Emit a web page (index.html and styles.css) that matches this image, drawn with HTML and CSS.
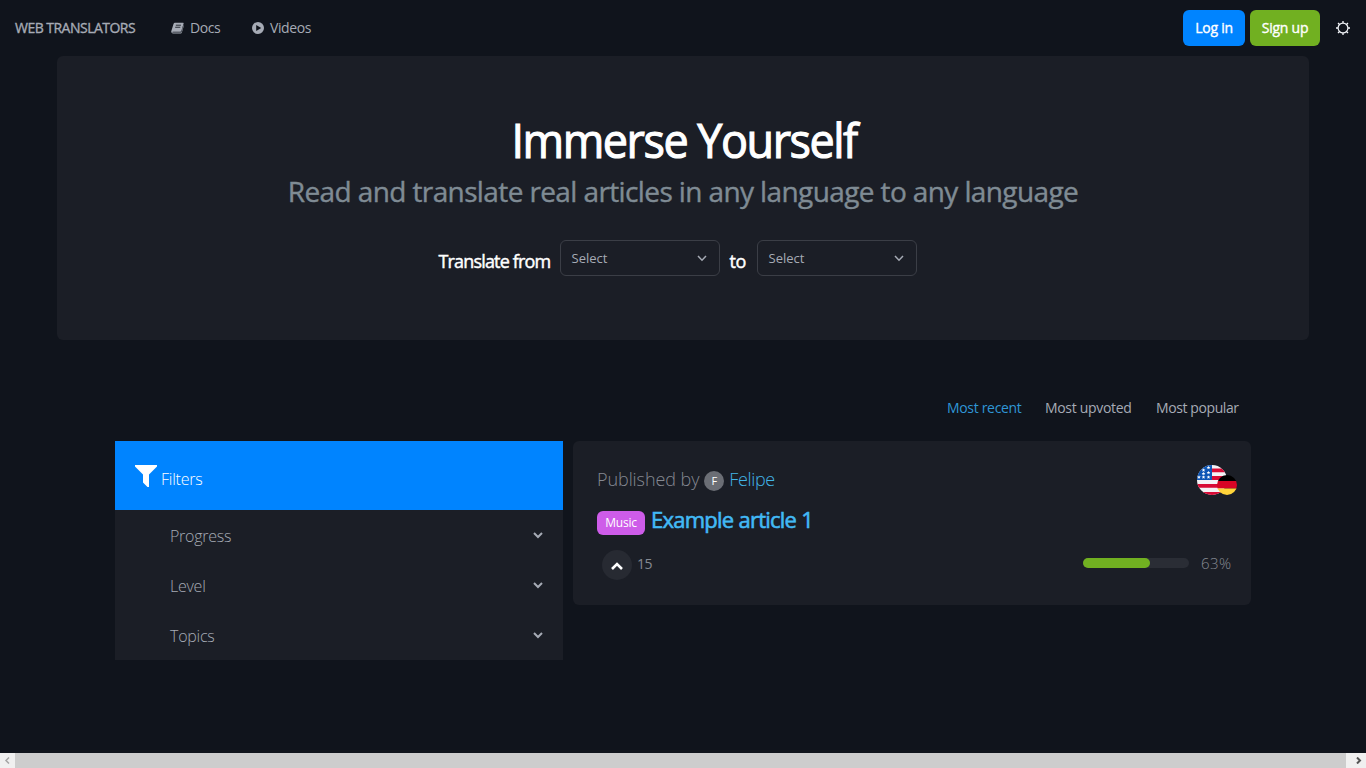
FILE: index.html
```html
<!DOCTYPE html>
<html lang="en">
<head>
<meta charset="utf-8">
<title>Web Translators</title>
<link rel="stylesheet" href="styles.css">
</head>
<body>
<div class="page">
  <nav class="nav">
    <a class="brand">WEB TRANSLATORS</a>
    <a class="nav-link docs">
      <svg class="nav-icon book" viewBox="0 0 14 12"><path d="M4.2.4h8.9q.7.1.5.8L11.2 9q-.3 1-1.300 1H2q-.8.1-.6.5.1.4.8.4h8.200q.7 0 .9-.7l2.300-7.500.3.5-2.200 7.600q-.3 1-1.300 1H1.900Q.2 11.700 .2 9.900L2.700 1.700Q3.200.4 4.200.4z" fill="currentColor"/><path d="M5.200 3h5.500M4.500 5.200H10" stroke="#10141c" stroke-width=".9"/></svg>
      <span>Docs</span>
    </a>
    <a class="nav-link videos">
      <svg class="nav-icon play" viewBox="0 0 12 12"><circle cx="6" cy="6" r="6" fill="currentColor"/><path d="M4.200 3l5 3-5 3z" fill="#10141c"/></svg>
      <span>Videos</span>
    </a>
    <div class="nav-actions">
      <a class="btn btn-login">Log in</a>
      <a class="btn btn-signup">Sign up</a>
      <svg class="sun" viewBox="0 0 14 14"><circle cx="7" cy="7" r="4.900" fill="none" stroke="#f4f6fa" stroke-width="1.200"/><path d="M7 0v2M7 12v2M0 7h2M12 7h2M2 2l1.500 1.500M10.500 10.500L12 12M2 12l1.500-1.500M10.500 3.500L12 2" stroke="#f4f6fa" stroke-width="1.300"/></svg>
    </div>
  </nav>

  <header class="hero">
    <h1 class="title">Immerse Yourself</h1>
    <p class="subtitle">Read and translate real articles in any language to any language</p>
    <div class="translate">
      <span class="lbl lbl-from">Translate from</span>
      <div class="select"><span>Select</span><svg class="caret" viewBox="0 0 10 7"><path d="M1 1l4 4.200L9 1" fill="none" stroke="currentColor" stroke-width="1.500"/></svg></div>
      <span class="lbl lbl-to">to</span>
      <div class="select"><span>Select</span><svg class="caret" viewBox="0 0 10 7"><path d="M1 1l4 4.200L9 1" fill="none" stroke="currentColor" stroke-width="1.500"/></svg></div>
    </div>
  </header>

  <div class="tabs">
    <a class="tab tab-active">Most recent</a>
    <a class="tab upvoted">Most upvoted</a>
    <a class="tab popular">Most popular</a>
  </div>

  <main class="content">
    <aside class="filters">
      <div class="filters-head">
        <svg class="funnel" viewBox="0 0 22 22"><path d="M0 0h22v1.500L14 9.500V22h-1.500L8 17.500V9.500L0 1.500z" fill="#fff"/></svg>
        <span>Filters</span>
      </div>
      <div class="filter"><span>Progress</span><svg class="chev" viewBox="0 0 10 7"><path d="M1 1l4 4L9 1" fill="none" stroke="currentColor" stroke-width="2"/></svg></div>
      <div class="filter"><span>Level</span><svg class="chev" viewBox="0 0 10 7"><path d="M1 1l4 4L9 1" fill="none" stroke="currentColor" stroke-width="2"/></svg></div>
      <div class="filter"><span>Topics</span><svg class="chev" viewBox="0 0 10 7"><path d="M1 1l4 4L9 1" fill="none" stroke="currentColor" stroke-width="2"/></svg></div>
    </aside>

    <article class="card">
      <div class="card-top">
        <div class="byline"><span class="published">Published by</span><span class="avatar">F</span><a class="author">Felipe</a></div>
        <svg class="flags" viewBox="0 0 40 30">
          <defs><clipPath id="us"><circle cx="15" cy="15" r="15"/></clipPath><clipPath id="de"><circle cx="30" cy="20" r="10"/></clipPath></defs>
          <g clip-path="url(#us)">
            <path fill="#f4f2f5" d="M0 0h30v30H0z"/>
            <path fill="#d80b36" d="M15 3.500h15v3.700H15zM15 11h15v4H15zM0 19h30v3.700H0zM0 27h30v3H0z"/>
            <path fill="#0c55b5" d="M0 0h15v15H0z"/>
            <g fill="#fff"><path id="star" d="M11.500.8l.5 1.300h1.400l-1.100.8.4 1.400-1.200-.8-1.200.8.4-1.400-1.100-.8H11z"/><use href="#star" y="5"/><use href="#star" y="9.500"/><use href="#star" x="-5" y="2.500"/><use href="#star" x="-5" y="6"/><use href="#star" x="-5" y="9.500"/><use href="#star" x="-9.500" y="9.500"/></g>
          </g>
          <g clip-path="url(#de)"><path d="M20 10h20v6H20z"/><path fill="#d80525" d="M20 16h20v7.500H20z"/><path fill="#ffd43a" d="M20 23.500h20V30H20z"/></g>
        </svg>
      </div>
      <div class="headline"><span class="tag">Music</span><a class="article">Example article 1</a></div>
      <div class="card-foot">
        <div class="vote"><svg viewBox="0 0 12 8"><path d="M1 7l5-5 5 5" fill="none" stroke="#fff" stroke-width="2.600"/></svg></div>
        <span class="votes">15</span>
        <div class="bar"><div class="bar-fill" style="width:63%"></div></div>
        <span class="percent">63%</span>
      </div>
    </article>
  </main>

  <div class="scrollbar">
    <div class="scroll-btn"><svg viewBox="0 0 7 7"><path d="M5 .5l-3 3 3 3" fill="none" stroke="#a5a5a5" stroke-width="1.500"/></svg></div>
    <div class="scroll-thumb"></div>
    <div class="scroll-btn scroll-right"><svg viewBox="0 0 7 7"><path d="M2 .5l3 3-3 3" fill="none" stroke="#555" stroke-width="2"/></svg></div>
  </div>
</div>
</body>
</html>
```
FILE: styles.css
```css
* { box-sizing: border-box; }
body { margin: 0; background: #10141c; color: #a6abb5; font-family: "Open Sans", "Noto Sans", sans-serif; font-size: 14px; overflow: hidden; }
svg { display: block; flex: none; }
span, a { white-space: nowrap; }
.page { height: 768px; display: flex; flex-direction: column; }

.nav { height: 56px; flex: none; display: flex; align-items: center; padding: 0 16px 0 15px; }
.brand { width: 156px; letter-spacing: -0.52px; -webkit-text-stroke: 0.35px; padding-bottom: 2px; }
.nav-link { display: flex; align-items: center; gap: 6px; letter-spacing: -0.4px; }
.nav-link span { padding-bottom: 2px; }
.docs { width: 81px; }
.nav-icon { height: 12px; }
.book { width: 13px; }
.play { width: 12px; }
.nav-actions { margin-left: auto; display: flex; align-items: center; }
.btn { height: 36px; border-radius: 6px; padding-bottom: 1px; display: flex; align-items: center; justify-content: center; color: #fff; -webkit-text-stroke: 0.35px; letter-spacing: -0.25px; }
.btn-login { width: 62px; background: #0084ff; margin-right: 5px; }
.btn-signup { width: 70px; background: #71b021; margin-right: 16px; }
.sun { width: 14px; height: 14px; }

.hero { margin: 0 57px; height: 284px; flex: none; background: #1b1e26; border-radius: 6px; padding-top: 56px; display: flex; flex-direction: column; align-items: center; }
.title { margin: 0; font-size: 48px; line-height: 55px; height: 56px; font-weight: 400; -webkit-text-stroke: 1.1px; color: #fff; letter-spacing: -1.6px; padding-left: 3px; white-space: nowrap; transform: scaleX(0.937); }
.subtitle { margin: 0; font-size: 28px; line-height: 46px; height: 48px; font-weight: 400; -webkit-text-stroke: 0.4px; color: #7f8b94; letter-spacing: -0.61px; white-space: nowrap; }
.translate { width: 479px; height: 36px; margin-top: 24px; margin-right: 12px; display: flex; }
.lbl { font-size: 18px; line-height: 43px; -webkit-text-stroke: 0.45px; color: #fff; letter-spacing: -0.84px; }
.lbl-from { width: 122px; padding-left: 1px; }
.lbl-to { width: 37px; padding-left: 10px; letter-spacing: -0.3px; }
.select { width: 160px; height: 36px; border: 1px solid #3b3e46; border-radius: 6px; padding: 0 12px 0 11px; display: flex; align-items: center; justify-content: space-between; font-size: 13px; }
.caret { width: 10px; height: 7px; }

.tabs { height: 101px; flex: none; padding: 58px 127px 0 0; display: flex; justify-content: flex-end; line-height: 20px; font-size: 14px; letter-spacing: -0.32px; }
.tab { width: 111px; }
.tab-active { width: 98px; color: #2f96d6; }
.popular { width: 83px; letter-spacing: -0.4px; }

.content { display: flex; gap: 10px; margin: 0 115px; flex: 1; align-items: flex-start; }
.filters { width: 448px; height: 219px; background: #1b1e26; font-size: 16px; font-weight: 300; letter-spacing: -0.25px; }
.filters-head { height: 69px; background: #0084ff; color: #fff; padding-left: 20px; display: flex; gap: 4px; }
.filters-head span { line-height: 77px; }
.funnel { width: 22px; height: 22px; margin-top: 24px; }
.filter { height: 50px; padding: 0 20px 0 55px; display: flex; align-items: center; justify-content: space-between; }
.filter span { padding-top: 1px; }
.chev { width: 10px; height: 7px; }

.card { width: 678px; height: 164px; background: #1b1e26; border-radius: 6px; padding: 24px 14px 0 24px; }
.card-top { display: flex; justify-content: space-between; height: 30px; }
.byline { display: flex; align-items: center; height: 28px; font-size: 18px; font-weight: 300; color: #858992; }
.published { letter-spacing: -0.08px; }
.avatar { width: 20px; height: 20px; border-radius: 50%; background: #6b6e75; color: #fff; font-size: 11px; font-weight: 400; line-height: 20px; text-align: center; margin: 4px 5px 0 5px; }
.author { color: #42b5e8; letter-spacing: -0.35px; }
.flags { width: 40px; height: 30px; }
.headline { display: flex; align-items: center; height: 50px; }
.tag { width: 48px; height: 24px; border-radius: 6px; background: #ce5ce9; color: #fff; font-size: 12px; line-height: 23px; letter-spacing: -0.2px; text-align: center; margin: 6px 6px 0 0; }
.article { font-size: 22px; -webkit-text-stroke: 0.6px; color: #42b9f5; letter-spacing: -0.75px; padding-bottom: 3px; }
.card-foot { display: flex; align-items: center; height: 30px; margin: 5px 0 0 5px; color: #858992; }
.vote { width: 30px; height: 30px; border-radius: 50%; background: #272a32; display: flex; align-items: center; justify-content: center; }
.vote svg { width: 12px; height: 8px; margin-top: 2px; }
.votes { margin-left: 5px; padding-bottom: 3px; letter-spacing: -0.4px; }
.bar { width: 106px; height: 10px; border-radius: 5px; background: #2a2d35; margin: 0 12px 4px auto; }
.bar-fill { height: 10px; border-radius: 5px; background: #71b021; }
.percent { width: 36px; font-size: 15px; font-weight: 300; letter-spacing: 0.4px; padding-bottom: 4px; }

.scrollbar { height: 15px; flex: none; display: flex; background: #f0f0f0; }
.scroll-btn { width: 15px; display: flex; align-items: center; justify-content: center; }
.scroll-btn svg { width: 7px; height: 7px; }
.scroll-right { width: 20px; padding-left: 5px; }
.scroll-thumb { flex: 1; background: #cdcdcd; }
```
